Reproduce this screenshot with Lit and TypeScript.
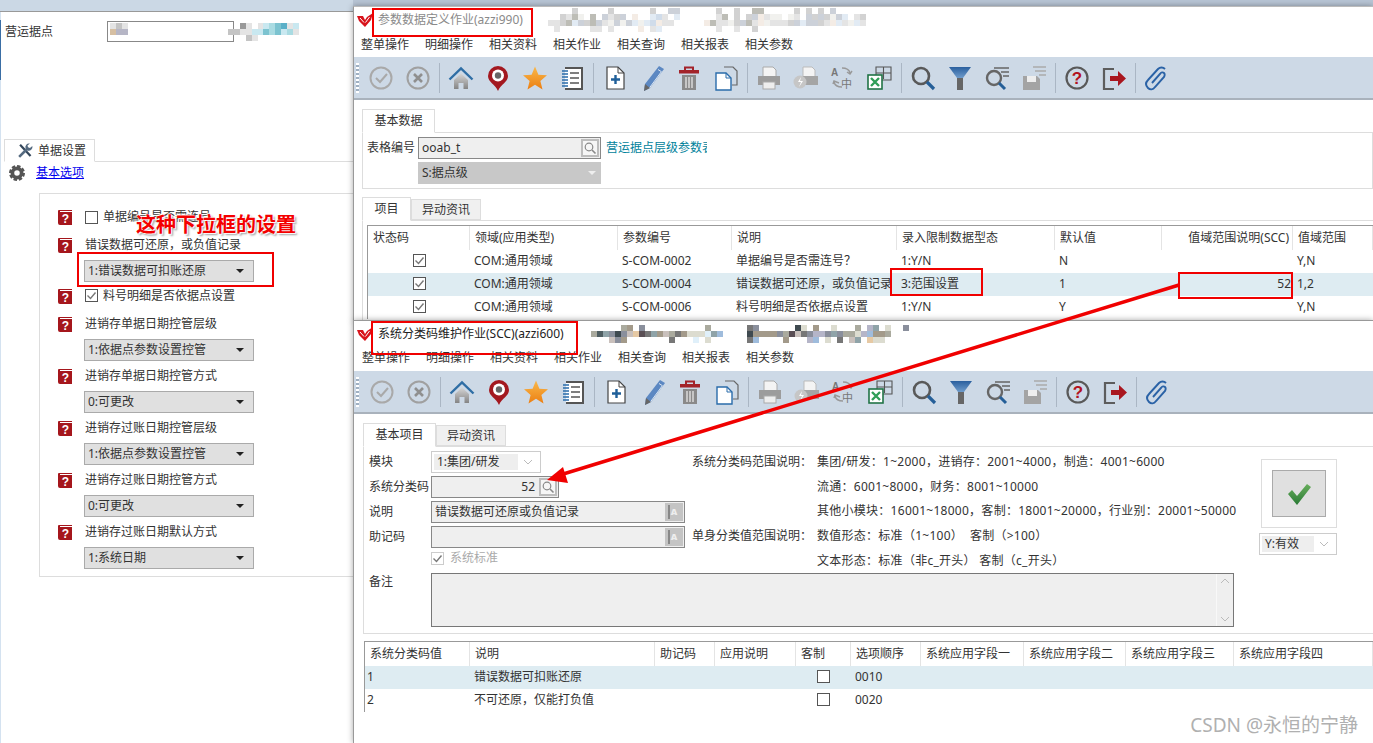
import { LitElement, css, html, svg } from 'lit';
import { customElement } from 'lit/decorators.js';

const LIGHT: Record<string, string> = {
    a: '#e4e4e4',
    b: '#d2d2d2',
    c: '#bdbdb6',
    d: '#e2ebf4',
    e: '#f4ece5',
    f: '#ccd1d9',
    g: '#f1f1ee',
    h: '#d0dcea',
};

const DARK: Record<string, string> = {
    a: '#aaaa9e',
    b: '#4f5e62',
    c: '#a39a8a',
    d: '#3f4a50',
    e: '#c9c0bc',
    f: '#e6c9a4',
    g: '#5a4f55',
    h: '#8a8f9c',
    i: '#8fa3a8',
    j: '#9fbcdc',
    k: '#e0f0fa',
    l: '#777777',
    m: '#b5b5c8',
    n: '#dcdcd0',
};

const PANE: Record<string, string> = {
    a: '#c4c4c4',
    b: '#e4e4e4',
    c: '#a9dbe2',
    d: '#7cc3d0',
    e: '#d6bfa2',
    f: '#b6b6c6',
    g: '#9fb4d2',
    h: '#5bb0c8',
    i: '#c9e8f0',
    j: '#999999',
};

const mosaic = (rows: string[], palette: Record<string, string>, size = 6) => html`<svg
    class="mosaic"
    width=${rows[0].length * size}
    height=${rows.length * size}
    shape-rendering="crispEdges"
>
    ${rows.map((row, y) =>
        [...row].map((ch, x) =>
            palette[ch]
                ? svg`<rect x=${x * size} y=${y * size} width=${size} height=${size} fill=${palette[ch]}></rect>`
                : null,
        ),
    )}
</svg>`;

const icon = (body: unknown, size = 26) =>
    html`<svg width=${size} height=${size} viewBox="0 0 26 26">${body}</svg>`;

const TOOLS: Record<string, unknown> = {
    ok: svg`<circle cx="13" cy="13" r="10.5" fill="none" stroke="#a9a9a9" stroke-width="2"/><path d="M8 13l4 4 7-8" fill="none" stroke="#a9a9a9" stroke-width="2"/>`,
    cancel: svg`<circle cx="13" cy="13" r="10.5" fill="none" stroke="#a0a0a0" stroke-width="2"/><path d="M9 9l8 8M17 9l-8 8" stroke="#8f8f8f" stroke-width="2.6"/>`,
    home: svg`<path d="M6 15L13 8.5 20 15V24H15.5V18H10.5V24H6Z" fill="url(#homeFill)"/><path d="M1.5 14.5L13 3.5 24.5 14.5" fill="none" stroke="#2f6ea5" stroke-width="2.4"/>`,
    pin: svg`<path d="M13 1a10 10 0 0 1 10 10c0 6-7 8-10 15C10 19 3 17 3 11A10 10 0 0 1 13 1Z" fill="#a3181f"/><circle cx="13" cy="10.5" r="6" fill="#fff"/><circle cx="13" cy="10.5" r="3.2" fill="#666"/>`,
    star: svg`<path d="M13 1.5l3.4 8.2 8.6.6-6.6 5.6 2.1 8.6L13 19.8l-7.5 4.7 2.1-8.6L1 10.3l8.6-.6Z" fill="url(#starFill)"/>`,
    list: svg`<path d="M6 3H23V24H6" fill="#fff" stroke="#555" stroke-width="2"/><path d="M11 8H20M11 13H20M11 18H20" stroke="#555" stroke-width="1.5"/><path d="M3 6H9M3 9H9M3 12H9M3 15H9M3 18H9M3 21H9" stroke="#2a6cab" stroke-width="1.6"/>`,
    add: svg`<path d="M5 2H16L22 8V24H5Z" fill="#fff" stroke="#444" stroke-width="1.2"/><path d="M16 2V8H22" fill="none" stroke="#444"/><path d="M9 14.5H18M13.5 10V19" stroke="#1f5f99" stroke-width="2.4"/>`,
    pencil: svg`<path d="M20 1l5 3L11 23l-6 3 1-7Z" fill="#5c88c2"/><path d="M19 4.5l3.4 2.2L10 23.5" fill="none" stroke="#dbe6f2"/><path d="M6 19l5 4-6 3Z" fill="#666"/>`,
    trash: svg`<path d="M9 5V2.5H17V5" fill="none" stroke="#a3232a" stroke-width="2"/><rect x="3" y="5" width="20" height="3.5" fill="#a3232a"/><rect x="6" y="10" width="14" height="15" fill="#8a8a8a"/><path d="M10 12V23M13 12V23M16 12V23" stroke="#eee" stroke-width="1.2"/>`,
    copy: svg`<path d="M11 2H20L24 6V20H19" fill="none" stroke="#666" stroke-width="1.2"/><path d="M3 8H13L18 13V25H3Z" fill="#fff" stroke="#2a6cab" stroke-width="1.4"/><path d="M13 8V13H18" fill="none" stroke="#2a6cab"/>`,
    print: svg`<path d="M7 11V2H17L20 5V11" fill="#f4f4f4" stroke="#aaa"/><rect x="2" y="11" width="22" height="9" fill="#9c9c9c"/><rect x="7" y="17" width="12" height="7" fill="#eee" stroke="#aaa"/>`,
    printFast: svg`<path d="M10 11V2H19L22 5V11" fill="#f4f4f4" stroke="#bbb"/><rect x="8" y="11" width="17" height="9" fill="#a5a5a5"/><circle cx="7" cy="17" r="6.5" fill="#c6c6c6"/><path d="M8 12l-3 5h3l-2 5 4-6H7Z" fill="#fff"/>`,
    lang: svg`<text x="1" y="11" font-size="10" font-family="Liberation Sans" font-weight="700" fill="#777">A</text><text x="11" y="23" font-size="11" font-family="Noto Sans CJK SC" fill="#777">中</text><path d="M12 3c4 0 7 1 8 5M17 7l3 2 2-3M12 22c-4 0-7-1-8-5M9 18l-5-2-1 3" fill="none" stroke="#999" stroke-width="1.4"/>`,
    excel: svg`<path d="M9 10V2H24V15H15M16.5 2V14M9 8H24" fill="none" stroke="#555" stroke-width="1.1"/><rect x="1" y="10" width="14" height="14" fill="#fff" stroke="#217346" stroke-width="1.6"/><path d="M4 13l8 8M12 13l-8 8" stroke="#2f9e57" stroke-width="2.4"/>`,
    search: svg`<circle cx="11" cy="11" r="8" fill="none" stroke="#595959" stroke-width="2.6"/><path d="M17 17l7 7" stroke="#255f98" stroke-width="3.2"/>`,
    filter: svg`<path d="M2 2H24L16 13H10Z" fill="url(#funnelFill)"/><rect x="10" y="13" width="6" height="12" fill="#666"/>`,
    searchList: svg`<circle cx="10" cy="13" r="7" fill="none" stroke="#666" stroke-width="2.4"/><path d="M15 18l6 6" stroke="#255f98" stroke-width="3"/><path d="M10 3H25M17 7H25M19 11H25" stroke="#666" stroke-width="1.6"/>`,
    saveList: svg`<path d="M2 11H16L19 14V25H2Z" fill="#a4a4a4"/><rect x="6" y="11" width="9" height="6" fill="#eee"/><path d="M12 2H25M14 6H25M18 10H25" stroke="#aaa" stroke-width="1.6"/>`,
    help: svg`<circle cx="13" cy="13" r="10.5" fill="none" stroke="#595959" stroke-width="2.2"/><text x="13" y="19" text-anchor="middle" font-size="17" font-weight="700" font-family="Liberation Sans" fill="#b3121d">?</text>`,
    exit: svg`<path d="M13 4H3V24H13" fill="none" stroke="#5d5d5d" stroke-width="2.2"/><path d="M9 11H17V6L25 13.5 17 21V16H9Z" fill="#a9161f"/>`,
    clip: svg`<path d="M21 4c-2-2-5-2-7 0L4 15c-3 3-2 6 0 8s5 2 7-1l9-10c1-2 1-3 0-4s-3-1-4 1l-8 9" fill="none" stroke="#2a62a6" stroke-width="1.9"/>`,
};

const TOOLBAR = [
    ['ok', 'cancel'],
    ['home', 'pin', 'star', 'list'],
    ['add', 'pencil', 'trash', 'copy'],
    ['print', 'printFast', 'lang', 'excel'],
    ['search', 'filter', 'searchList', 'saveList'],
    ['help', 'exit'],
    ['clip'],
];

const MENU = ['整单操作', '明细操作', '相关资料', '相关作业', '相关查询', '相关报表', '相关参数'];

const PARAM_COLS = [
    { label: '状态码' },
    { label: '领域(应用类型)' },
    { label: '参数编号' },
    { label: '说明' },
    { label: '录入限制数据型态' },
    { label: '默认值' },
    { label: '值域范围说明(SCC)', right: true },
    { label: '值域范围' },
];

const PARAM_ROWS = [
    ['COM:通用领域', 'S-COM-0002', '单据编号是否需连号？', '1:Y/N', 'N', '', 'Y,N'],
    ['COM:通用领域', 'S-COM-0004', '错误数据可还原，或负值记录', '3:范围设置', '1', '52', '1,2'],
    ['COM:通用领域', 'S-COM-0006', '料号明细是否依据点设置', '1:Y/N', 'Y', '', 'Y,N'],
];

const CODE_COLS = [
    '系统分类码值',
    '说明',
    '助记码',
    '应用说明',
    '客制',
    '选项顺序',
    '系统应用字段一',
    '系统应用字段二',
    '系统应用字段三',
    '系统应用字段四',
];

const CODE_ROWS = [
    ['1', '错误数据可扣账还原', '0010'],
    ['2', '不可还原，仅能打负值', '0020'],
];

const OPTIONS = [
    { label: '错误数据可还原，或负值记录', value: '1:错误数据可扣账还原' },
    { label: '料号明细是否依据点设置', check: true },
    { label: '进销存单据日期控管层级', value: '1:依据点参数设置控管' },
    { label: '进销存单据日期控管方式', value: '0:可更改' },
    { label: '进销存过账日期控管层级', value: '1:依据点参数设置控管' },
    { label: '进销存过账日期控管方式', value: '0:可更改' },
    { label: '进销存过账日期默认方式', value: '1:系统日期' },
];

const RANGE_NOTES = [
    ['系统分类码范围说明：', '集团/研发：1~2000，进销存：2001~4000，制造：4001~6000'],
    ['', '流通：6001~8000，财务：8001~10000'],
    ['', '其他小模块：16001~18000，客制：18001~20000，行业别：20001~50000'],
    ['单身分类值范围说明：', '数值形态：标准（1~100）\u00a0\u00a0客制（>100）'],
    ['', '文本形态：标准（非c_开头） 客制（c_开头）'],
];

const helpBook = html`<svg class="help" width="14" height="16" viewBox="0 0 14 16">
    <path d="M1 1H14V2H2V3H14V16H2Q0 16 0 14V2Q0 1 1 1Z" fill="#a5161c" />
    <text x="7.5" y="14" text-anchor="middle" font-size="12" font-weight="700" font-family="Liberation Sans" fill="#fff">?</text>
</svg>`;

const checkBox = (checked: boolean) => html`<svg class="check" width="13" height="13" viewBox="0 0 13 13">
    <rect x="0.5" y="0.5" width="12" height="12" fill="#fff" stroke="#555" />
    ${checked ? svg`<path d="M2.5 6.5l3 3 5-6" fill="none" stroke="#777" stroke-width="1.4"/>` : null}
</svg>`;

const lookupBtn = html`<span class="lookup"
    ><svg width="14" height="14" viewBox="0 0 14 14">
        <rect width="14" height="14" fill="#f6f6f6" />
        <circle cx="6" cy="6" r="3.8" fill="none" stroke="#888" stroke-width="1.2" />
        <path d="M9 9l3.5 3.5" stroke="#888" stroke-width="1.6" /></svg
></span>`;

const langBtn = html`<span class="lang-btn"><i></i><b>A</b></span>`;

const logo = html`<svg class="logo" width="16" height="14" viewBox="0 0 16 14">
    <path d="M0 3L6 3 8 7 10 4 16 0 14 7 8 14 2 8Z" fill="#d8141c" />
    <path d="M3 5L7 9.5M12.5 4L8.5 9.5" stroke="#fff" stroke-width="1" />
</svg>`;

@customElement('app-root')
export class AppRoot extends LitElement {
    static styles = css`
        :host {
            display: block;
            position: relative;
            width: 1373px;
            height: 743px;
            overflow: hidden;
            background: #fff;
            font: 12px/16px 'Noto Sans', 'Noto Sans CJK SC', sans-serif;
            color: #333;
        }

        svg {
            display: block;
            flex: none;
        }

        /* left settings page */
        .pane {
            width: 352px;
            height: 743px;
            border-left: 1px solid #d4e2f0;
        }

        .pane-top {
            height: 11px;
            margin-left: -1px;
            background: #cbd8e5;
            border-bottom: 1px solid #999;
        }

        .pane-stripe {
            position: absolute;
            left: 0;
            top: 20px;
            width: 1px;
            height: 60px;
            background: #3a6ea5;
        }

        .site-row {
            position: relative;
            display: flex;
            align-items: center;
            height: 21px;
            margin-top: 9px;
            padding-left: 4px;
        }

        .site-row label {
            width: 102px;
        }

        .site-input {
            width: 125px;
            height: 19px;
            border: 1px solid #888;
        }

        .site-blur {
            position: absolute;
            left: 109px;
            top: 2px;
        }

        .pane-tabs {
            display: flex;
            margin: 97px 0 0 3px;
            border-bottom: 1px solid #ddd;
        }

        .pane-tab {
            display: flex;
            align-items: center;
            gap: 5px;
            width: 91px;
            height: 23px;
            margin-bottom: -1px;
            padding-left: 12px;
            box-sizing: border-box;
            background: #fff;
            border: 1px solid #ddd;
            border-bottom: 1px solid #fff;
        }

        .basic {
            display: flex;
            align-items: center;
            gap: 11px;
            height: 22px;
            padding: 0 0 0 8px;
        }

        .basic a {
            color: #0000ee;
            text-decoration: underline;
        }

        .opt-box {
            margin: 9px 0 0 38px;
            padding: 10px 0 7px 18px;
            border: 1px solid #ddd;
            border-right: none;
        }

        .opt-row {
            display: flex;
            align-items: center;
            gap: 13px;
            height: 30px;
        }

        .opt-row.first {
            height: 26px;
        }

        .opt-row.tick {
            height: 27px;
        }

        .opt-row .check {
            margin-right: -8px;
        }

        .sel {
            display: flex;
            align-items: center;
            justify-content: space-between;
            box-sizing: border-box;
            width: 170px;
            height: 22px;
            margin-left: 26px;
            padding: 0 9px 0 3px;
            background: #e0e0e0;
            border: 1px solid #aaa;
        }

        .sel::after {
            content: '';
            border: 4px solid transparent;
            border-top: 4px solid #222;
            border-bottom: none;
        }

        /* program windows */
        .win {
            position: absolute;
            left: 353px;
            width: 1020px;
            display: flex;
            flex-direction: column;
            box-sizing: border-box;
            background: #fff;
            border-left: 1px solid #999;
            overflow: hidden;
            box-shadow: 0 0 6px rgba(0, 0, 0, 0.35);
        }

        .win-a {
            top: 6px;
            height: 316px;
            border-top: 1px solid #bbb;
        }

        .win-b {
            top: 320px;
            height: 423px;
            border-top: 1px solid #999;
        }

        .backdrop {
            position: absolute;
            left: 353px;
            top: 0;
            width: 1020px;
            height: 6px;
            background: #b8c5d5;
        }

        .title {
            display: flex;
            align-items: center;
            height: 26px;
            padding-left: 3px;
            flex: none;
        }

        .win-b .title {
            color: #222;
        }

        .win-a .title {
            color: #8a8a8a;
        }

        .title .logo {
            margin-right: 5px;
        }

        .title-blur {
            display: flex;
            margin-left: 25px;
            gap: 18px;
        }

        .win-b .title-blur {
            margin-left: 27px;
            gap: 0;
        }

        .menu {
            display: flex;
            gap: 16px;
            height: 24px;
            padding-left: 7px;
            align-items: center;
            flex: none;
        }

        .win-b .menu {
            box-sizing: border-box;
            padding: 0 0 2px 8px;
        }

        .toolbar {
            display: flex;
            align-items: center;
            height: 41px;
            flex: none;
            background: #cdd9e6;
            border-bottom: 2px solid #a9b2bc;
        }

        .grip {
            width: 3px;
            height: 30px;
            margin: 0 3.5px 0 2px;
            background: repeating-linear-gradient(#fff 0 2px, #9fb0c2 2px 4px);
        }

        .win-b .grip {
            margin-right: 4.5px;
        }

        .tool {
            display: flex;
            justify-content: center;
            width: 37px;
        }

        .sep {
            width: 1px;
            height: 30px;
            margin: 0 2.5px;
            background: #aab6c4;
        }

        .body {
            padding: 9px 0 0 8px;
        }

        .win-b .body {
            padding-left: 9px;
        }

        .tabs {
            display: flex;
        }

        .tab {
            display: flex;
            align-items: center;
            justify-content: center;
            box-sizing: border-box;
            height: 24px;
            padding: 0 11.5px;
            margin-bottom: -1px;
            background: #fff;
            border: 1px solid #ddd;
            border-bottom: 1px solid #fff;
            position: relative;
        }

        .tab.off {
            height: 21px;
            margin-top: 2px;
            padding: 0 10px;
            background: #f0f0f0;
            border-bottom: 1px solid #ddd;
        }

        .panel {
            border: 1px solid #ddd;
        }

        .head-panel {
            height: 57px;
            box-sizing: border-box;
            padding: 4px 0 0 4px;
        }

        .kv {
            display: flex;
            align-items: center;
            height: 22px;
            margin-bottom: 3px;
        }

        .kv label {
            width: 51px;
            flex: none;
        }

        .field {
            display: flex;
            align-items: center;
            justify-content: space-between;
            box-sizing: border-box;
            height: 22px;
            padding: 0 1px 0 3px;
            background: #efefef;
            border: 1px solid #888;
        }

        .field.w183 {
            width: 183px;
        }

        .field.w128 {
            width: 128px;
            padding-right: 1px;
        }

        .field.w254 {
            width: 254px;
        }

        .lookup {
            display: flex;
            align-items: center;
            justify-content: center;
            width: 18px;
            height: 18px;
            background: #bdbdbd;
        }

        .lang-btn {
            position: relative;
            display: flex;
            width: 18px;
            height: 18px;
            background: #c4c4c4;
            color: #eee;
            font-size: 9px;
            font-weight: 700;
            align-items: center;
            justify-content: center;
        }

        .lang-btn i {
            position: absolute;
            left: 3px;
            top: 2px;
            width: 2px;
            height: 14px;
            background: #888;
        }

        .grey-sel {
            display: flex;
            align-items: center;
            justify-content: space-between;
            box-sizing: border-box;
            width: 183px;
            height: 22px;
            margin-left: 51px;
            padding: 0 5px 0 4px;
            background: #c8c8c8;
        }

        .grey-sel::after {
            content: '';
            border: 4px solid transparent;
            border-top: 4px solid #eee;
            border-bottom: none;
        }

        .link {
            margin-left: 5px;
            width: 101px;
            overflow: hidden;
            white-space: nowrap;
            color: #00829b;
        }

        .sub-tabs {
            margin-top: 8px;
        }

        .sub-panel {
            height: 100px;
            padding: 4px 0 0 4px;
            border-bottom: none;
            border-right: none;
        }

        .grid {
            display: grid;
            grid-template-rows: 24px;
            grid-auto-rows: 23px;
            border-top: 1px solid #999;
            border-left: 1px solid #999;
        }

        .params {
            grid-template-columns: 102px 148px 114px 165px 158px 107px 131px 80px;
        }

        .codes {
            margin: 7px 0 0 1px;
            grid-template-columns: 105px 185px 60px 81px 55px 70px 103px 102px 108px 139px;
        }

        .hd {
            display: flex;
            align-items: center;
            padding-left: 5px;
            box-sizing: border-box;
            border-right: 1px solid #e4e4e4;
            white-space: nowrap;
        }

        .hd.right {
            justify-content: flex-end;
            padding-right: 3px;
        }

        .cell {
            display: flex;
            align-items: center;
            padding-left: 4px;
            padding-bottom: 2px;
            white-space: nowrap;
            overflow: hidden;
        }

        .cell.right {
            justify-content: flex-end;
            padding-right: 2px;
        }

        .cell.mid {
            justify-content: center;
            padding-left: 0;
        }

        .cell.on {
            background: #deecf2;
        }

        .cell.tight {
            padding-left: 2px;
        }

        .form-panel {
            height: 188px;
            box-sizing: border-box;
            border-right: none;
            padding: 4px 0 0 5px;
        }

        .form-top {
            display: flex;
        }

        .form-left {
            width: 323px;
            flex: none;
        }

        .form-left .kv label {
            width: 62px;
        }

        .combo {
            display: flex;
            align-items: center;
            box-sizing: border-box;
            width: 110px;
            height: 22px;
            padding: 2px;
            background: #fff;
            border: 1px solid #ccc;
        }

        .combo span {
            flex: 1;
            height: 16px;
            padding-left: 3px;
            line-height: 16px;
            background: #eee;
        }

        .combo svg {
            margin: 0 5px;
        }

        .readonly {
            display: flex;
            align-items: center;
            gap: 6px;
            height: 14px;
            margin: 2px 0 7px 62px;
            color: #aaa;
        }

        .readonly .check rect {
            stroke: #ccc;
        }

        .num {
            flex: 1;
            padding-right: 4px;
            text-align: right;
        }

        .notes {
            width: 542px;
            flex: none;
            margin-top: -1.5px;
        }

        .note {
            display: flex;
            align-items: center;
            height: 24.7px;
            white-space: nowrap;
        }

        .note span:first-child {
            width: 125px;
            flex: none;
        }

        .note span + span {
            letter-spacing: 0.27px;
        }

        .status {
            margin: 8px 0 0 25px;
            width: 78px;
        }

        .status-box {
            display: flex;
            align-items: center;
            justify-content: center;
            box-sizing: border-box;
            width: 76px;
            height: 69px;
            margin-left: 2px;
            border: 1px solid #ddd;
        }

        .status-btn {
            display: flex;
            align-items: center;
            justify-content: center;
            box-sizing: border-box;
            width: 54px;
            height: 47px;
            background: #e0e0e0;
            border: 1px solid #aaa;
        }

        .status .combo {
            width: 78px;
            margin-top: 5px;
        }

        .remark {
            display: flex;
            align-items: flex-start;
        }

        .remark label {
            width: 62px;
            padding-top: 1px;
        }

        .remark-box {
            display: flex;
            justify-content: flex-end;
            box-sizing: border-box;
            width: 803px;
            height: 54px;
            background: #efefef;
            border: 1px solid #777;
        }

        .remark-bar {
            display: flex;
            flex-direction: column;
            justify-content: space-between;
            align-items: center;
            width: 16px;
            padding: 4px 0;
            border-left: 1px solid #f8f8f8;
        }

        /* reviewer's markup on the screenshot */
        .markup {
            position: absolute;
            left: 0;
            top: 0;
        }

        .callout {
            position: absolute;
            left: 136px;
            top: 211px;
            font:
                700 20px/26px 'Noto Sans CJK SC',
                sans-serif;
            color: #f40000;
            text-shadow:
                1px 1px 1px #fff,
                -1px -1px 1px #fff,
                2px 2px 2px #999;
            white-space: nowrap;
        }

        .mark {
            position: absolute;
            right: 15px;
            bottom: 6px;
            font:
                19px/24px 'Noto Sans',
                'Noto Sans CJK SC',
                sans-serif;
            color: #b0b0b0;
        }
    `;

    private renderToolbar() {
        return html`<div class="toolbar">
            <div class="grip"></div>
            ${TOOLBAR.map(
                (group, i) => html`
                    ${i ? html`<div class="sep"></div>` : null}
                    ${group.map((name) => html`<div class="tool">${icon(TOOLS[name])}</div>`)}
                `,
            )}
        </div>`;
    }

    private renderMenu() {
        return html`<div class="menu">${MENU.map((item) => html`<span>${item}</span>`)}</div>`;
    }

    private renderPane() {
        return html`<div class="pane">
            <div class="pane-top"></div>
            <div class="pane-stripe"></div>
            <div class="site-row">
                <label>营运据点</label>
                <div class="site-input"></div>
                <div class="site-blur">
                    ${mosaic(
                        [
                            'bab...................jb.bicdhbi',
                            'eff.................aabbiidcdicb',
                            '.......................ab.......',
                        ],
                        PANE,
                        5.9,
                    )}
                </div>
            </div>
            <div class="pane-tabs">
                <div class="pane-tab">
                    ${icon(
                        svg`<path d="M5 3l17 18" stroke="#33465a" stroke-width="3.6"/><path d="M21 1a6 6 0 0 0-7 8L2 21l3 3L17 12a6 6 0 0 0 8-7l-4 3-3-1-1-3Z" fill="#556a80"/>`,
                        16,
                    )}
                    单据设置
                </div>
            </div>
            <div class="basic">
                ${icon(
                    svg`<circle cx="13" cy="13" r="7.5" fill="none" stroke="#555" stroke-width="6"/><circle cx="13" cy="13" r="11" fill="none" stroke="#555" stroke-width="4" stroke-dasharray="5.6 3"/>`,
                    16,
                )}
                <a>基本选项</a>
            </div>
            <div class="opt-box">
                <div class="opt-row first">${helpBook}${checkBox(false)}<span>单据编号是否需连号</span></div>
                ${OPTIONS.map((opt) =>
                    opt.check
                        ? html`<div class="opt-row tick">${helpBook}${checkBox(true)}<span>${opt.label}</span></div>`
                        : html`<div class="opt-row">${helpBook}<span>${opt.label}</span></div>
                              <div class="sel">${opt.value}</div>`,
                )}
            </div>
        </div>`;
    }

    private renderParamWindow() {
        return html`<div class="win win-a">
            <div class="title">
                ${logo}<span>参数数据定义作业(azzi990)</span>
                <div class="title-blur">
                    ${mosaic(
                        [
                            '....b.....b......b..ff.',
                            '..bacg.c.fabf.e..dha.d.',
                            'aabcdfbcfagfgfdgdheaa..',
                            '.a.....aa.a....e.ad....',
                        ],
                        LIGHT,
                    )}
                    ${mosaic(
                        [
                            '..b..b..cc.....b.b.b.f.....',
                            '..ac.b.bfeagg.ga.fbfbgfd.ab',
                            'ecaagbfcaegaaabfdffbaedagda',
                            '..a..a..b..................',
                        ],
                        LIGHT,
                    )}
                </div>
            </div>
            ${this.renderMenu()} ${this.renderToolbar()}
            <div class="body">
                <div class="tabs"><div class="tab">基本数据</div></div>
                <div class="panel head-panel">
                    <div class="kv">
                        <label>表格编号</label>
                        <div class="field w183">ooab_t ${lookupBtn}</div>
                        <span class="link">营运据点层级参数表</span>
                    </div>
                    <div class="grey-sel">S:据点级</div>
                </div>
                <div class="tabs sub-tabs">
                    <div class="tab">项目</div>
                    <div class="tab off">异动资讯</div>
                </div>
                <div class="panel sub-panel">
                    <div class="grid params">
                        ${PARAM_COLS.map(
                            (col) => html`<div class="hd ${col.right ? 'right' : ''}">${col.label}</div>`,
                        )}
                        ${PARAM_ROWS.map((row, r) => {
                            const on = r === 1 ? 'on' : '';
                            return html`
                                <div class="cell mid ${on}">${checkBox(true)}</div>
                                ${row.map(
                                    (text, c) =>
                                        html`<div class="cell ${on} ${c === 5 ? 'right' : ''}">${text}</div>`,
                                )}
                            `;
                        })}
                    </div>
                </div>
            </div>
        </div>`;
    }

    private renderCodeWindow() {
        const chevron = html`<svg width="10" height="6" viewBox="0 0 10 6">
            <path d="M1 1l4 4 4-4" fill="none" stroke="#bbb" />
        </svg>`;
        return html`<div class="win win-b">
            <div class="title">
                ${logo}<span>系统分类码维护作业(SCC)(azzi600)</span>
                <div class="title-blur">
                    ${mosaic(
                        [
                            '.....ac.h..........a......lh......dn.c..n...a.mi.n..h',
                            'abihdhefglicealcnnnkij....dcccchagelhmmhihaanmjcca...',
                            '...ehc.......l...k.n......lj....c...mj.n.l.ei.fnn....',
                        ],
                        DARK,
                    )}
                </div>
            </div>
            ${this.renderMenu()} ${this.renderToolbar()}
            <div class="body">
                <div class="tabs">
                    <div class="tab">基本项目</div>
                    <div class="tab off">异动资讯</div>
                </div>
                <div class="panel form-panel">
                    <div class="form-top">
                        <div class="form-left">
                            <div class="kv">
                                <label>模块</label>
                                <div class="combo"><span>1:集团/研发</span>${chevron}</div>
                            </div>
                            <div class="kv">
                                <label>系统分类码</label>
                                <div class="field w128"><span class="num">52</span>${lookupBtn}</div>
                            </div>
                            <div class="kv">
                                <label>说明</label>
                                <div class="field w254">错误数据可还原或负值记录 ${langBtn}</div>
                            </div>
                            <div class="kv">
                                <label>助记码</label>
                                <div class="field w254"><span></span>${langBtn}</div>
                            </div>
                            <div class="readonly">
                                ${checkBox(true)}<span>系统标准</span>
                            </div>
                        </div>
                        <div class="notes">
                            ${RANGE_NOTES.map(
                                ([head, text]) =>
                                    html`<div class="note"><span>${head}</span><span>${text}</span></div>`,
                            )}
                        </div>
                        <div class="status">
                            <div class="status-box">
                                <div class="status-btn">
                                    ${icon(
                                        svg`<path d="M2 13l4-4 5 6L21 3l4 3L11 24Z" fill="url(#okFill)"/>`,
                                    )}
                                </div>
                            </div>
                            <div class="combo"><span>Y:有效</span>${chevron}</div>
                        </div>
                    </div>
                    <div class="remark">
                        <label>备注</label>
                        <div class="remark-box">
                            <div class="remark-bar">
                                <svg width="10" height="6" viewBox="0 0 10 6">
                                    <path d="M1 5l4-4 4 4" fill="none" stroke="#bbb" />
                                </svg>
                                ${chevron}
                            </div>
                        </div>
                    </div>
                </div>
                <div class="grid codes">
                    ${CODE_COLS.map((label) => html`<div class="hd">${label}</div>`)}
                    ${CODE_ROWS.map(([no, text, order], r) => {
                        const on = r === 0 ? 'on' : '';
                        return html`
                            <div class="cell tight ${on}">${no}</div>
                            <div class="cell ${on}">${text}</div>
                            <div class="cell ${on}"></div>
                            <div class="cell ${on}"></div>
                            <div class="cell mid ${on}">${checkBox(false)}</div>
                            <div class="cell ${on}">${order}</div>
                            <div class="cell ${on}"></div>
                            <div class="cell ${on}"></div>
                            <div class="cell ${on}"></div>
                            <div class="cell ${on}"></div>
                        `;
                    })}
                </div>
            </div>
        </div>`;
    }

    private renderMarkup() {
        const boxes = [
            [78, 253, 195, 33],
            [373, 9, 159, 27],
            [891, 269, 91, 26],
            [1179, 273, 113, 25],
            [372, 322, 205, 32],
        ];
        return html`<svg class="markup" width="1373" height="743">
            ${boxes.map(
                ([x, y, w, h]) =>
                    svg`<rect x=${x} y=${y} width=${w} height=${h} fill="none" stroke="#f00000" stroke-width="2"></rect>`,
            )}
            <path d="M1179 285L560 475" stroke="#f00000" stroke-width="3.5" />
            <path d="M547 480L563 467 568 483Z" fill="#f00000" />
        </svg>`;
    }

    render() {
        return html`
            <svg width="0" height="0" style="position:absolute">
                <defs>
                    <linearGradient id="homeFill" x1="0" y1="0" x2="0" y2="1">
                        <stop offset="0" stop-color="#d6d6d6" />
                        <stop offset="1" stop-color="#848484" />
                    </linearGradient>
                    <linearGradient id="starFill" x1="0" y1="0" x2="0" y2="1">
                        <stop offset="0" stop-color="#f9b84a" />
                        <stop offset="1" stop-color="#ec7f12" />
                    </linearGradient>
                    <linearGradient id="funnelFill" x1="0" y1="0" x2="0" y2="1">
                        <stop offset="0" stop-color="#2a5f9e" />
                        <stop offset="1" stop-color="#6f9ccb" />
                    </linearGradient>
                    <linearGradient id="okFill" x1="0" y1="0" x2="0" y2="1">
                        <stop offset="0" stop-color="#68ae5c" />
                        <stop offset="1" stop-color="#2a7a35" />
                    </linearGradient>
                </defs>
            </svg>
            ${this.renderPane()}
            <div class="backdrop"></div>
            ${this.renderParamWindow()} ${this.renderCodeWindow()} ${this.renderMarkup()}
            <div class="callout">这种下拉框的设置</div>
            <div class="mark">CSDN @永恒的宁静</div>
        `;
    }
}
